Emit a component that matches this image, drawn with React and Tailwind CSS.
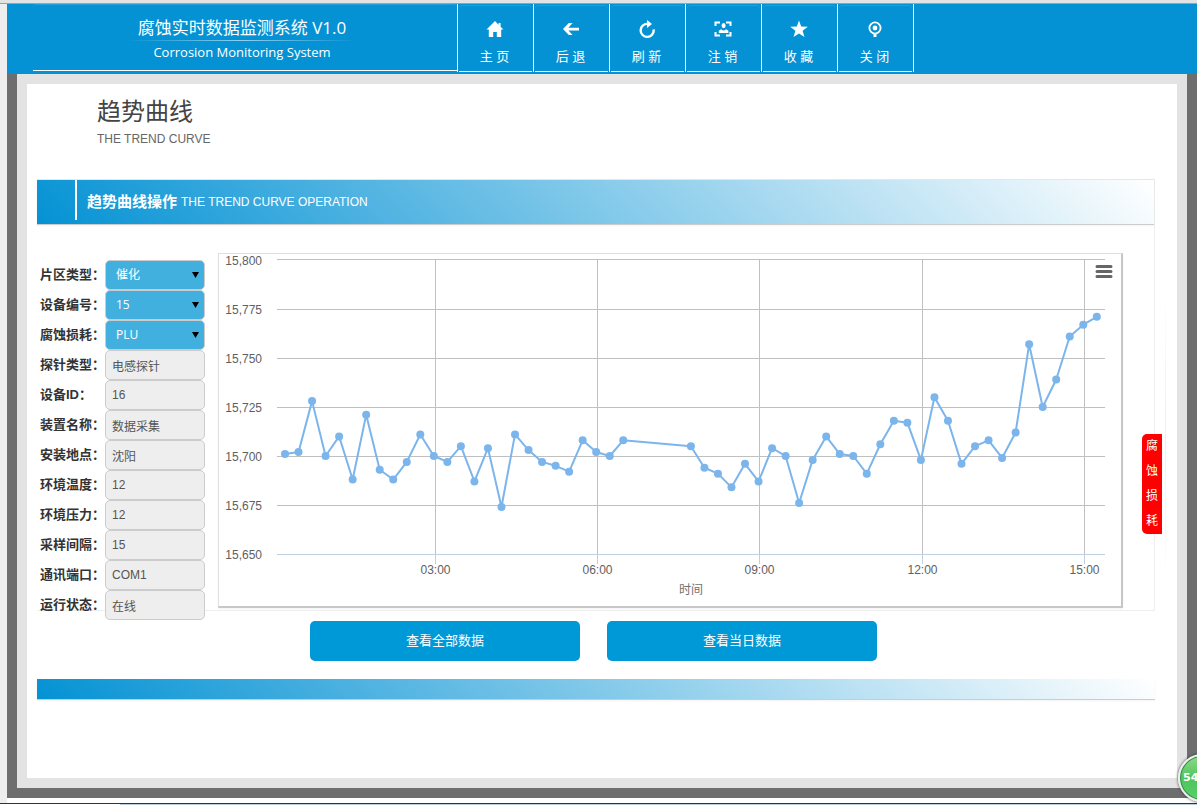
// App.jsx
import { useState } from 'react';

const NAV_ITEMS = [
    { label: '主 页', icon: HomeIcon },
    { label: '后 退', icon: BackIcon },
    { label: '刷 新', icon: RefreshIcon },
    { label: '注 销', icon: LogoutIcon },
    { label: '收 藏', icon: StarIcon },
    { label: '关 闭', icon: CloseIcon },
];

const SELECTS = [
    { id: 'area', label: '片区类型：', options: ['催化'] },
    { id: 'device', label: '设备编号：', options: ['15'] },
    { id: 'loss', label: '腐蚀损耗：', options: ['PLU'] },
];

const FIELDS = [
    { id: 'probe', label: '探针类型：', value: '电感探针' },
    { id: 'deviceId', label: '设备ID：', value: '16' },
    { id: 'unit', label: '装置名称：', value: '数据采集' },
    { id: 'place', label: '安装地点：', value: '沈阳' },
    { id: 'temp', label: '环境温度：', value: '12' },
    { id: 'pressure', label: '环境压力：', value: '12' },
    { id: 'interval', label: '采样间隔：', value: '15' },
    { id: 'port', label: '通讯端口：', value: 'COM1' },
    { id: 'status', label: '运行状态：', value: '在线' },
];

// one sample per 15 minutes, null = no data
const SAMPLES = [
    15701, 15702, 15728, 15700, 15710, 15688, 15721, 15693, 15688, 15697, 15711, 15700, 15697,
    15705, 15687, 15704, 15674, 15711, 15703, 15697, 15695, 15692, 15708, 15702, 15700, 15708,
    null, null, null, null,
    15705, 15694, 15691, 15684, 15696, 15687, 15704, 15700, 15676, 15698, 15710, 15701, 15700,
    15691, 15706, 15718, 15717, 15698, 15730, 15718, 15696, 15705, 15708, 15699, 15712, 15757,
    15725, 15739, 15761, 15767, 15771,
];

const Y_TICKS = [
    { label: '15,800', y: 5.5 },
    { label: '15,775', y: 55.5 },
    { label: '15,750', y: 104.5 },
    { label: '15,725', y: 153.5 },
    { label: '15,700', y: 202.5 },
    { label: '15,675', y: 251.5 },
    { label: '15,650', y: 300.5 },
];

const X_TICKS = [
    { label: '03:00', x: 216.5 },
    { label: '06:00', x: 378.5 },
    { label: '09:00', x: 540.5 },
    { label: '12:00', x: 703.5 },
    { label: '15:00', x: 865.5 },
];

function HomeIcon() {
    return (
        <svg width="18" height="18" viewBox="0 0 18 18" fill="currentColor" aria-hidden="true">
            <path d="M9 1 0.5 9.6h2.3V17h4.4v-5h3.6v5h4.4V9.6h2.3L14.6 6.7V3h-2v1.7z" />
        </svg>
    );
}

function BackIcon() {
    return (
        <svg width="18" height="18" viewBox="0 0 18 18" fill="currentColor" aria-hidden="true">
            <path d="M6.8 3H10.6L6.4 7.7H17v2.8H6.4L10.6 15H6.8L1 9z" />
        </svg>
    );
}

function RefreshIcon() {
    return (
        <svg width="18" height="18" viewBox="0 0 18 18" fill="none" stroke="currentColor" strokeWidth="2.4" aria-hidden="true">
            <path d="M10 3.9A6.5 6.5 0 1 0 15.6 9.4" />
            <path d="M9 0l5 4-5 4z" fill="currentColor" stroke="none" />
        </svg>
    );
}

function LogoutIcon() {
    return (
        <svg width="18" height="18" viewBox="0 0 18 18" fill="none" stroke="currentColor" strokeWidth="2" aria-hidden="true">
            <path d="M1.5 6V2.5H6M12 2.5h4.5V6M16.5 12v3.5H12M6 15.5H1.5V12" />
            <ellipse cx="9.6" cy="5.6" rx="2" ry="2.6" fill="currentColor" stroke="none" />
            <path d="M4.8 13v-2.2l2.2-1.6 2 1.4h1.2l2-1.4 2.2 1.6V13z" fill="currentColor" stroke="none" />
        </svg>
    );
}

function StarIcon() {
    return (
        <svg width="18" height="18" viewBox="0 0 18 18" fill="currentColor" aria-hidden="true">
            <path d="M9 0.5l2.2 6 6.6.2-5.2 4 1.9 6.4L9 13.4l-5.5 3.7 1.9-6.4-5.2-4 6.6-.2z" />
        </svg>
    );
}

function CloseIcon() {
    return (
        <svg width="18" height="18" viewBox="0 0 18 18" fill="none" stroke="currentColor" aria-hidden="true">
            <circle cx="9" cy="8" r="5.6" strokeWidth="1.8" />
            <circle cx="9" cy="8" r="2.4" fill="currentColor" stroke="none" />
            <path d="M9 13v4" strokeWidth="3" />
        </svg>
    );
}

function Header() {
    return (
        <header className="flex h-[70px] bg-[#0492d4] pl-[26px] font-['Open_Sans','Noto_Sans_CJK_SC',sans-serif] text-white">
            <div className="flex h-[67px] w-[424px] flex-col items-center rounded-t border-t border-b border-t-[#209fda] border-b-white pt-[11px] pr-1.5">
                <h1 className="text-[17px] leading-6">腐蚀实时数据监测系统 V1.0</h1>
                <div className="h-px w-[230px] bg-linear-to-r from-transparent via-[#8fd0ee] to-transparent" />
                <p className="mt-px text-[13px] leading-5">Corrosion Monitoring System</p>
            </div>
            <nav className="flex h-[68px] border-r border-white">
                {NAV_ITEMS.map(({ label, icon: Icon }) => (
                    <button key={label} type="button" className="w-[76px] border-l border-white px-px">
                        <span className="flex h-[67px] flex-col items-center rounded-t border-t border-b border-t-[#209fda] border-b-white pt-3.5 pr-0.5">
                            <Icon />
                            <span className="mt-2 text-[13px] leading-5">{label}</span>
                        </span>
                    </button>
                ))}
            </nav>
        </header>
    );
}

function SelectRow({ id, label, options }) {
    const [value, setValue] = useState(options[0]);

    return (
        <div className="flex h-[30px] items-center">
            <label htmlFor={id} className="w-[65px] whitespace-nowrap text-[13px] font-bold text-[#333]">
                {label}
            </label>
            <div className="relative h-[30px] w-[100px]">
                <select
                    id={id}
                    value={value}
                    onChange={e => setValue(e.target.value)}
                    className="h-full w-full appearance-none rounded-[5px] border border-[#ccc] bg-[#42b0df] pl-2.5 font-['Open_Sans','Noto_Sans_CJK_SC',sans-serif] text-xs text-white"
                >
                    {options.map(o => (
                        <option key={o}>{o}</option>
                    ))}
                </select>
                <svg className="pointer-events-none absolute top-3 right-1.5" width="7" height="6" viewBox="0 0 7 6" aria-hidden="true">
                    <path d="M0 0h7L3.5 6z" fill="#000" />
                </svg>
            </div>
        </div>
    );
}

function FieldRow({ id, label, value }) {
    return (
        <div className="flex h-[30px] items-center">
            <label htmlFor={id} className="w-[65px] whitespace-nowrap text-[13px] font-bold text-[#333]">
                {label}
            </label>
            <input
                id={id}
                readOnly
                value={value}
                className="h-[30px] w-[100px] rounded-[5px] border border-[#ccc] bg-[#eee] px-1.5 text-xs text-[#555]"
            />
        </div>
    );
}

function TrendChart() {
    const points = SAMPLES
        .map((v, i) => (v === null ? null : { x: 66 + i * 13.53, y: 202 - (v - 15700) * 1.96 }))
        .filter(Boolean);

    return (
        <svg viewBox="0 0 902 352" className="block w-full text-xs" role="img" aria-label="趋势曲线">
            {X_TICKS.map(t => (
                <g key={t.label}>
                    <path d={`M${t.x} 6V300`} stroke="#c0c0c0" />
                    <path d={`M${t.x} 301v9`} stroke="#c0d0e0" />
                    <text x={t.x} y="320" textAnchor="middle" fill="#606060">{t.label}</text>
                </g>
            ))}
            {Y_TICKS.map((t, i) => (
                <g key={t.label}>
                    <path d={`M58 ${t.y}H886`} stroke={i === Y_TICKS.length - 1 ? '#c0d0e0' : '#c0c0c0'} />
                    <text x="43" y={i === 0 ? 11 : Math.round(t.y + 4)} textAnchor="end" fill="#606060">{t.label}</text>
                </g>
            ))}
            <text x="472" y="340" textAnchor="middle" fill="#707070">时间</text>
            <polyline
                points={points.map(p => `${p.x},${p.y}`).join(' ')}
                fill="none"
                stroke="#7cb5ec"
                strokeWidth="2"
                strokeLinejoin="round"
            />
            {points.map(p => (
                <circle key={p.x} cx={p.x} cy={p.y} r="4" fill="#7cb5ec" />
            ))}
            <path d="M878 12.5h14M878 17.5h14M878 22.5h14" stroke="#666" strokeWidth="3" strokeLinecap="round" />
        </svg>
    );
}

export default function App() {
    return (
        <div className="relative flex min-h-screen flex-col overflow-hidden bg-white font-['Liberation_Sans','Noto_Sans_CJK_SC',sans-serif]">
            <div className="h-1 border-b border-[#a0a0a0] bg-[#e3e3e3]" />
            <div className="flex flex-1 flex-col border-l-[7px] border-[#eee]">
                <Header />
                <main className="mb-[5px] flex flex-1 flex-col border-10 border-t-0 border-[#6e6e6e]">
                    <div className="flex-1 border-10 border-[#e3e3e3] bg-white pr-[22px] pl-2.5">
                        <div className="pt-3 pb-[30px] pl-[60px]">
                            <h2 className="text-2xl leading-8 text-[#444]">趋势曲线</h2>
                            <p className="mt-px text-xs leading-5 text-[#666]">THE TREND CURVE</p>
                        </div>

                        <section className="relative border-r border-b border-[#eee]">
                            <div className="flex h-[46px] items-center border-t border-b border-t-[#e6e6e6] border-b-[#ccc] bg-linear-45/srgb from-[#0492d4] to-white shadow-xs">
                                <div className="mb-1 ml-[38px] h-10 w-0.5 bg-white" />
                                <h3 className="ml-2.5 flex items-center gap-1 text-xs text-white">
                                    <b className="text-[15px]">趋势曲线操作</b> THE TREND CURVE OPERATION
                                </h3>
                            </div>
                            <div className="flex items-start pt-7 pr-[31px] pl-[3px]">
                                <form className="mt-[7px] mr-[13px] -mb-2.5">
                                    {SELECTS.map(s => (
                                        <SelectRow key={s.id} {...s} />
                                    ))}
                                    {FIELDS.map(f => (
                                        <FieldRow key={f.id} {...f} />
                                    ))}
                                </form>
                                <div className="min-w-0 flex-1 border-t border-r-2 border-b-2 border-l border-t-[#e0e0e0] border-r-[#c7c7c7] border-b-[#c7c7c7] border-l-[#e0e0e0] shadow-xs">
                                    <TrendChart />
                                </div>
                            </div>
                            <div className="absolute top-[108px] -right-3 h-[296px] w-px bg-linear-to-b from-transparent via-[#eee] to-transparent" />
                            <button type="button" className="absolute top-[255px] -right-2 w-5 rounded-l-[5px] bg-[#f00] px-1 text-xs leading-[25px] break-all text-white">
                                腐蚀损耗
                            </button>
                        </section>

                        <div className="mt-2.5 flex justify-center gap-[27px] pr-[5px]">
                            <button type="button" className="h-10 w-[270px] rounded-[5px] bg-[#0099d8] text-[13px] text-white">
                                查看全部数据
                            </button>
                            <button type="button" className="h-10 w-[270px] rounded-[5px] bg-[#0099d8] text-[13px] text-white">
                                查看当日数据
                            </button>
                        </div>
                        <div className="mt-[18px] h-[21px] border-b border-[#ccc] bg-linear-45/srgb from-[#0492d4] to-white shadow-xs" />
                    </div>
                </main>
            </div>
            <div className="flex h-0.5 border-t border-[#333] bg-[#b9cfe0]">
                <div className="w-[120px] bg-white" />
            </div>
            <div className="absolute -right-[29px] bottom-[3px] h-12 w-12 rounded-full border-2 border-[#eee] bg-linear-to-b from-[#8fd98a] via-[#4cc45c] to-[#5ccf6a] pl-[3px] font-['DejaVu_Sans',sans-serif] text-[11px] leading-[44px] font-bold text-white shadow-[0_0_3px_#333] inset-ring-1 inset-ring-[#2f8a4a]">
                54
            </div>
        </div>
    );
}
